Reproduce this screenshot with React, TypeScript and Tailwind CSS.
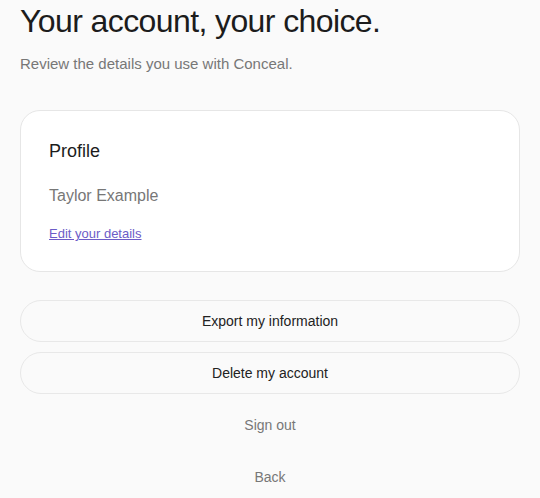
export default function App() {
  return (
    <div className="min-h-screen bg-[#fafafa] px-5 pt-[3px] font-['Liberation_Sans',Arial,sans-serif]">
      {/* Header */}
      <h1 className="text-[32px] leading-9 tracking-[-0.6px] text-[#1c1c1c]">Your account, your choice.</h1>
      <p className="mt-[14px] text-[15px] leading-[22px] text-[#777]">
        Review the details you use with Conceal.
      </p>

      {/* Profile card */}
      <div className="mt-[35px] rounded-[20px] border border-[#e6e6e6] bg-white p-7">
        <h2 className="text-lg leading-6 text-[#1c1c1c]">Profile</h2>
        <p className="mt-[21px] text-base leading-6 text-[#777]">Taylor Example</p>
        <a href="#" className="mt-[17px] block text-[13px] leading-[18px] text-[#6c5cc7] underline">
          Edit your details
        </a>
      </div>

      {/* Actions */}
      <div className="mt-7 flex flex-col gap-[10px]">
        <button className="h-[42px] w-full rounded-full border border-[#e8e8e8] bg-[#fafafa] text-sm text-[#222]">
          Export my information
        </button>
        <button className="h-[42px] w-full rounded-full border border-[#e8e8e8] bg-[#fafafa] text-sm text-[#222]">
          Delete my account
        </button>
        <button className="h-[42px] w-full text-sm text-[#777]">Sign out</button>
        <button className="h-[42px] w-full text-sm text-[#777]">Back</button>
      </div>
    </div>
  );
}
